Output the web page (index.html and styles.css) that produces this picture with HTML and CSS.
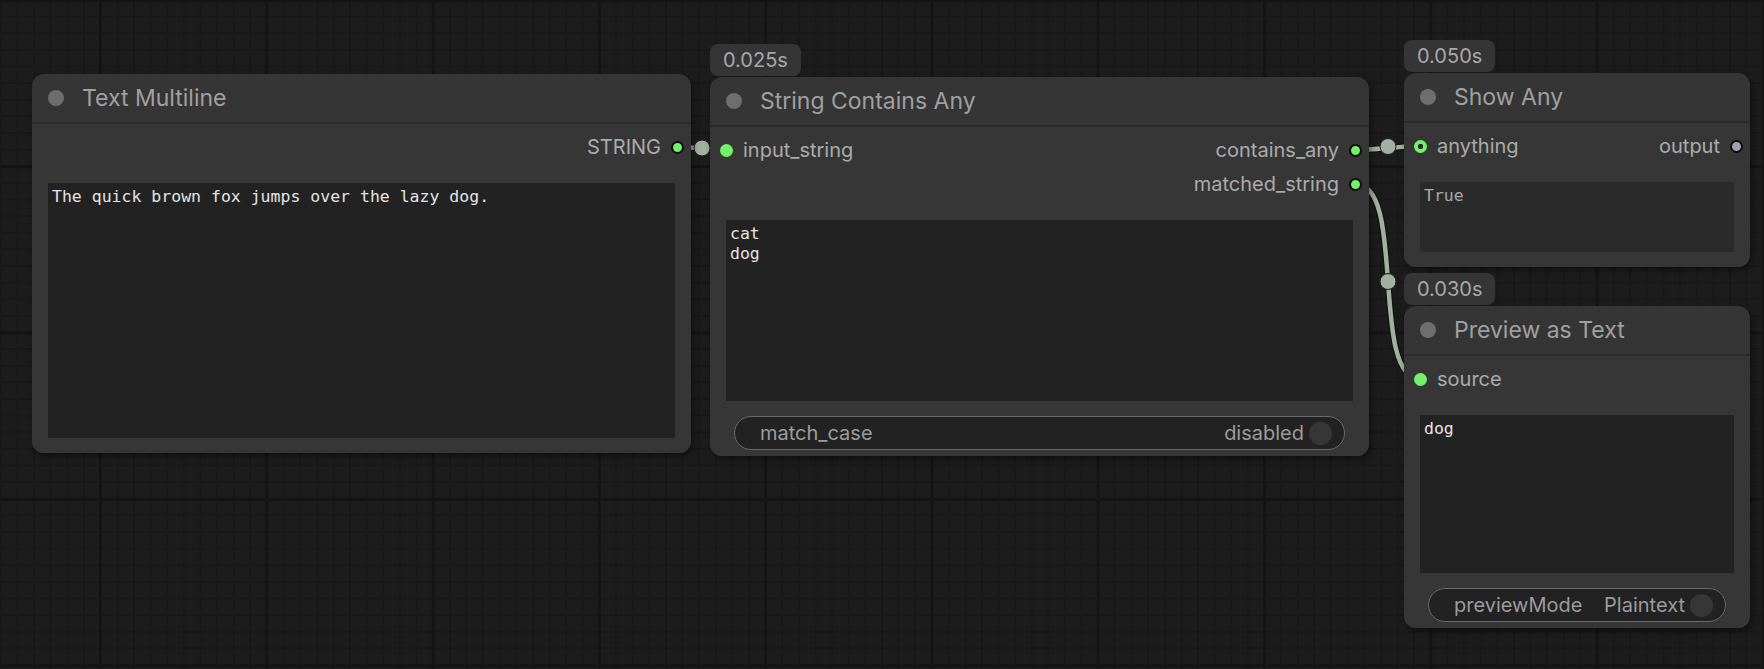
FILE: index.html
```html
<!DOCTYPE html>
<html lang="en">
<head>
    <meta charset="UTF-8">
    <title>Graph</title>
    <link rel="stylesheet" href="styles.css">
</head>
<body>
    <div class="canvas">
        <!-- links sit under the nodes -->
        <svg class="links" width="1764" height="669" viewBox="0 0 1764 669">
            <g class="link-edge">
                <path d="M677.5 147 C690 147, 714 150, 726.5 150"/>
                <path d="M1355.5 150 C1371.5 150, 1404.5 146, 1420.5 146"/>
                <path d="M1355.5 184 C1407 184, 1369 379, 1420.5 379"/>
            </g>
            <g class="link-line">
                <path d="M677.5 147 C690 147, 714 150, 726.5 150"/>
                <path d="M1355.5 150 C1371.5 150, 1404.5 146, 1420.5 146"/>
                <path d="M1355.5 184 C1407 184, 1369 379, 1420.5 379"/>
            </g>
            <g class="link-mid">
                <circle cx="702" cy="148" r="8"/>
                <circle cx="1388" cy="146.5" r="8"/>
                <circle cx="1388" cy="281.5" r="8"/>
            </g>
        </svg>

        <!-- Text Multiline -->
        <div class="node node-multiline">
            <div class="node-header"><span class="dot"></span>Text Multiline</div>
            <div class="node-body">
                <div class="slot-row">
                    <span></span>
                    <span class="slot">STRING<span class="port out"></span></span>
                </div>
                <div class="field">The quick brown fox jumps over the lazy dog.</div>
            </div>
        </div>

        <!-- String Contains Any -->
        <div class="node node-contains">
            <div class="badge">0.025s</div>
            <div class="node-header"><span class="dot"></span>String Contains Any</div>
            <div class="node-body with-toggle">
                <div class="slot-row">
                    <span class="slot"><span class="port"></span>input_string</span>
                    <span class="slot">contains_any<span class="port out"></span></span>
                </div>
                <div class="slot-row">
                    <span></span>
                    <span class="slot">matched_string<span class="port out"></span></span>
                </div>
                <div class="field">cat
dog</div>
                <div class="toggle">
                    <span class="toggle-label">match_case</span>
                    <span class="toggle-value">disabled</span>
                    <span class="knob"></span>
                </div>
            </div>
        </div>

        <!-- Show Any -->
        <div class="node node-show">
            <div class="badge">0.050s</div>
            <div class="node-header"><span class="dot"></span>Show Any</div>
            <div class="node-body">
                <div class="slot-row">
                    <span class="slot"><span class="port ring"></span>anything</span>
                    <span class="slot">output<span class="port out grey"></span></span>
                </div>
                <div class="field readonly">True</div>
            </div>
        </div>

        <!-- Preview as Text -->
        <div class="node node-preview">
            <div class="badge">0.030s</div>
            <div class="node-header"><span class="dot"></span>Preview as Text</div>
            <div class="node-body with-toggle">
                <div class="slot-row">
                    <span class="slot"><span class="port"></span>source</span>
                    <span></span>
                </div>
                <div class="field">dog</div>
                <div class="toggle">
                    <span class="toggle-label">previewMode</span>
                    <span class="toggle-value">Plaintext</span>
                    <span class="knob"></span>
                </div>
            </div>
        </div>
    </div>
</body>
</html>
```

FILE: styles.css
```css
* {
    box-sizing: border-box;
}
body {
    margin: 0;
    width: 1764px;
    height: 669px;
    overflow: hidden;
    font-family: Inter, "Noto Sans", sans-serif;
    background-color: #1c1c1c;
    background-image:
        linear-gradient(#141414 3px, transparent 3px),
        linear-gradient(90deg, #141414 3px, transparent 3px),
        linear-gradient(#181818 2px, transparent 2px),
        linear-gradient(90deg, #181818 2px, transparent 2px);
    background-size: 166.3px 166.3px, 166.3px 166.3px, 16.63px 16.63px, 16.63px 16.63px;
    background-position: 0 -1px, 99px 0, 0 -1px, 0 0;
}
.canvas {
    position: relative;
    width: 100%;
    height: 100%;
}
.links {
    position: absolute;
    left: 0;
    top: 0;
}
.link-edge path {
    fill: none;
    stroke: #0e0e0e;
    stroke-width: 7;
    opacity: 0.7;
}
.link-line path {
    fill: none;
    stroke: #a2b19f;
    stroke-width: 4.5;
}
.link-mid circle {
    fill: #a2b19f;
    stroke: #1a1a1a;
    stroke-width: 1;
}

/* nodes */
.node {
    position: absolute;
    display: flex;
    flex-direction: column;
    background: #353535;
    border-radius: 12px;
    box-shadow: 2px 3px 6px rgba(0, 0, 0, 0.45);
}
.node-multiline { left: 32px; top: 74px; width: 659px; height: 379px; }
.node-contains { left: 710px; top: 77px; width: 659px; height: 379px; }
.node-show { left: 1404px; top: 73px; width: 346px; height: 194px; }
.node-preview { left: 1404px; top: 306px; width: 346px; height: 322px; }

.badge {
    position: absolute;
    left: 0;
    top: -33px;
    width: 91px;
    height: 32px;
    padding-left: 13px;
    display: flex;
    align-items: center;
    background: #353535;
    border-radius: 8px;
    color: #a8a8a8;
    font-size: 20px;
}
.node-header {
    flex: none;
    height: 50px;
    display: flex;
    align-items: center;
    gap: 18px;
    padding-left: 16px;
    padding-bottom: 1px;
    border-bottom: 2px solid #2b2b2b;
    color: #a0a0a0;
    font-size: 23px;
}
.node-header .dot {
    width: 16px;
    height: 16px;
    border-radius: 50%;
    background: #6e6e6e;
}
.node-body {
    flex: 1;
    display: flex;
    flex-direction: column;
    padding: 6px 0 15px;
    background: #363636;
    border-radius: 0 0 12px 12px;
    min-height: 0;
}
.node-body.with-toggle {
    padding-bottom: 6px;
}
.slot-row {
    flex: none;
    height: 34px;
    display: flex;
    align-items: center;
    justify-content: space-between;
    padding: 0 7px 0 10px;
    color: #ababab;
    font-size: 20px;
}
.slot {
    display: flex;
    align-items: center;
    gap: 10px;
}
.port {
    width: 13px;
    height: 13px;
    border-radius: 50%;
    background: #72f16b;
}
.port.out {
    border: 2px solid #0c0c0c;
}
.port.ring {
    background: radial-gradient(circle, #2c2c2c 0 2.5px, #72f16b 3px);
}
.port.grey {
    background: #a19fb3;
}
.field {
    flex: 1;
    margin: 19px 16px 0;
    padding: 3.5px 4px;
    background: #222222;
    color: #e4e4e4;
    font-family: "DejaVu Sans Mono", monospace;
    font-size: 16.5px;
    line-height: 20px;
    white-space: pre;
    overflow: hidden;
}
.field.readonly {
    background: #2a2a2a;
    color: #a9a9a9;
}
.toggle {
    flex: none;
    height: 34px;
    margin: 15px 24px 0;
    padding: 0 12px 0 25px;
    display: flex;
    align-items: center;
    border: 1.5px solid #6a6a6a;
    border-radius: 17px;
    background: #222222;
    color: #9c9c9c;
    font-size: 20px;
}
.toggle-label {
    flex: 1;
}
.toggle-value {
    margin-right: 5px;
}
.knob {
    width: 23px;
    height: 23px;
    border-radius: 50%;
    background: #363636;
}
```
